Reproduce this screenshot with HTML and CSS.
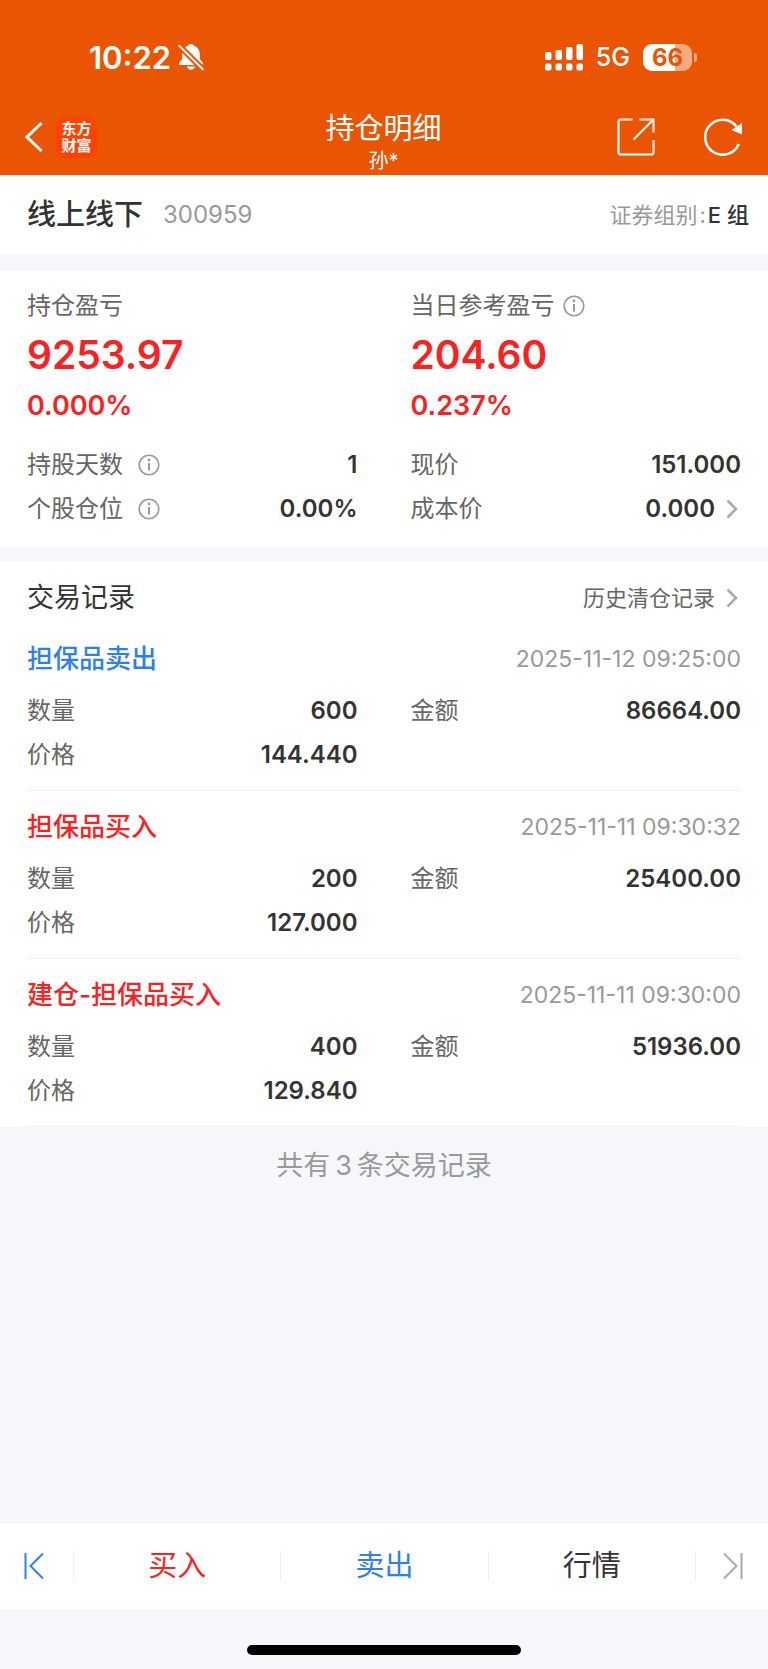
FILE: index.html
```html
<!DOCTYPE html>
<html lang="zh-CN">
<head>
    <meta charset="UTF-8">
    <meta name="viewport" content="width=device-width, initial-scale=1.0">
    <title>持仓明细</title>
    <link rel="stylesheet" href="styles.css">
</head>
<body>
    <svg class="sprite" width="0" height="0" aria-hidden="true">
        <symbol id="info" viewBox="0 0 22 22">
            <circle cx="11" cy="11" r="9.8" fill="none" stroke="currentColor" stroke-width="1.6"/>
            <path d="M11 9v7.6" stroke="currentColor" stroke-width="2"/>
            <circle cx="11" cy="6" r="1.4" fill="currentColor"/>
        </symbol>
        <symbol id="chevron" viewBox="0 0 12 20">
            <path d="M1.500 1.500L10 10l-8.500 8.500" fill="none" stroke="currentColor" stroke-width="2.500"/>
        </symbol>
    </svg>

    <header class="header">
        <div class="status-bar">
            <div class="status-left">
                <span class="time">10:22</span>
                <svg width="26" height="28" viewBox="0 0 26 28" aria-hidden="true">
                    <path d="M13 1c-1.800 0-2.700 1-3 1.800C6.500 4 4.200 7 4.200 11v4.500c0 1.300-3.200 3.600-3.200 5.200 0 .9.600 1.300 1.600 1.300h20.800c1 0 1.600-.4 1.600-1.300 0-1.600-3.200-3.900-3.200-5.200V11c0-4-2.300-7-5.800-8.200C15.700 2 14.800 1 13 1z" fill="#fff"/>
                    <path d="M8.800 23.500h8.400c-.6 2-2.200 3.200-4.200 3.200s-3.600-1.200-4.200-3.200z" fill="#fff"/>
                    <path d="M0 1.500L25.500 27" stroke="#ea5504" stroke-width="6"/>
                    <path d="M1.200 2.700L24.800 26.300" stroke="#fff" stroke-width="2" stroke-linecap="round"/>
                </svg>
            </div>
            <div class="status-right">
                <svg width="38" height="28" viewBox="0 0 38 28" fill="#fff" aria-hidden="true">
                    <rect x="0" y="9" width="6.500" height="8" rx="2"/>
                    <rect x="10.500" y="7" width="6.500" height="10" rx="2"/>
                    <rect x="21" y="4" width="6.500" height="13" rx="2"/>
                    <rect x="31.500" y="1" width="6.500" height="16" rx="2"/>
                    <rect x="0" y="20.500" width="6.500" height="7" rx="2"/>
                    <rect x="10.500" y="20.500" width="6.500" height="7" rx="2"/>
                    <rect x="21" y="20.500" width="6.500" height="7" rx="2"/>
                    <rect x="31.500" y="20.500" width="6.500" height="7" rx="2"/>
                </svg>
                <span class="network">5G</span>
                <span class="battery">66</span>
            </div>
        </div>

        <nav class="nav">
            <div class="nav-left">
                <button class="icon-btn" type="button" aria-label="返回">
                    <svg width="18" height="32" viewBox="0 0 18 32" fill="none" stroke="#fff" stroke-width="3">
                        <path d="M16.500 2L2 16l14.500 14"/>
                    </svg>
                </button>
                <span class="brand">东方<br>财富</span>
            </div>
            <div class="nav-title">
                <h1>持仓明细</h1>
                <p>孙*</p>
            </div>
            <div class="nav-right">
                <button class="icon-btn" type="button" aria-label="分享">
                    <svg width="38" height="38" viewBox="0 0 38 38" fill="none" stroke="#fff" stroke-width="2">
                        <path d="M15.500 1.500H3.500a2 2 0 0 0-2 2v31a2 2 0 0 0 2 2h31a2 2 0 0 0 2-2V22"/>
                        <path d="M22.500 1.500h14v13M36 2L16.500 21.500"/>
                    </svg>
                </button>
                <button class="icon-btn" type="button" aria-label="刷新">
                    <svg width="38" height="38" viewBox="0 0 38 38" fill="none" stroke="#fff" stroke-width="2.500">
                        <path d="M34.800 26A17.500 17.500 0 1 1 32.500 8.500"/>
                        <path d="M38 5v11.500L27.500 12z" fill="#fff" stroke="none"/>
                    </svg>
                </button>
            </div>
        </nav>
    </header>

    <main>
        <section class="stock">
            <h2>线上线下</h2>
            <span class="code">300959</span>
            <p class="group">证券组别<span class="colon">:</span><b>E 组</b></p>
        </section>

        <section class="summary">
            <div class="column">
                <h3>持仓盈亏</h3>
                <p class="profit">9253.97</p>
                <p class="percent">0.000%</p>
                <dl class="rows">
                    <div><dt>持股天数<svg class="info"><use href="#info"/></svg></dt><dd>1</dd></div>
                    <div><dt>个股仓位<svg class="info"><use href="#info"/></svg></dt><dd>0.00%</dd></div>
                </dl>
            </div>
            <div class="column">
                <h3>当日参考盈亏<svg class="info near"><use href="#info"/></svg></h3>
                <p class="profit">204.60</p>
                <p class="percent">0.237%</p>
                <dl class="rows">
                    <div><dt>现价</dt><dd>151.000</dd></div>
                    <div><dt>成本价</dt><dd>0.000<svg class="chevron"><use href="#chevron"/></svg></dd></div>
                </dl>
            </div>
        </section>

        <section class="records">
            <div class="records-head">
                <h2>交易记录</h2>
                <a href="#history">历史清仓记录<svg class="chevron"><use href="#chevron"/></svg></a>
            </div>

            <article class="record">
                <div class="record-head">
                    <h3 class="sell">担保品卖出</h3>
                    <time>2025-11-12 09:25:00</time>
                </div>
                <dl class="rows record-rows">
                    <div><dt>数量</dt><dd>600</dd></div>
                    <div><dt>金额</dt><dd>86664.00</dd></div>
                    <div><dt>价格</dt><dd>144.440</dd></div>
                </dl>
            </article>

            <article class="record">
                <div class="record-head">
                    <h3 class="buy">担保品买入</h3>
                    <time>2025-11-11 09:30:32</time>
                </div>
                <dl class="rows record-rows">
                    <div><dt>数量</dt><dd>200</dd></div>
                    <div><dt>金额</dt><dd>25400.00</dd></div>
                    <div><dt>价格</dt><dd>127.000</dd></div>
                </dl>
            </article>

            <article class="record">
                <div class="record-head">
                    <h3 class="buy">建仓-担保品买入</h3>
                    <time>2025-11-11 09:30:00</time>
                </div>
                <dl class="rows record-rows">
                    <div><dt>数量</dt><dd>400</dd></div>
                    <div><dt>金额</dt><dd>51936.00</dd></div>
                    <div><dt>价格</dt><dd>129.840</dd></div>
                </dl>
            </article>
        </section>

        <p class="total">共有<span class="count">3</span>条交易记录</p>
    </main>

    <footer class="footer">
        <div class="tab-bar">
            <button class="side prev" type="button" aria-label="上一只">
                <svg width="20" height="28" viewBox="0 0 20 28" fill="none" stroke="currentColor" stroke-width="2">
                    <path d="M1.500 1v26M19 1.500L6.500 14 19 26.500"/>
                </svg>
            </button>
            <button class="buy" type="button">买入</button>
            <button class="sell" type="button">卖出</button>
            <button type="button">行情</button>
            <button class="side next" type="button" aria-label="下一只">
                <svg width="20" height="28" viewBox="0 0 20 28" fill="none" stroke="currentColor" stroke-width="2">
                    <path d="M18.500 1v26M1 1.500L13.500 14 1 26.500"/>
                </svg>
            </button>
        </div>
        <div class="home-indicator"></div>
    </footer>
</body>
</html>
```

FILE: styles.css
```css
* {
    margin: 0;
    padding: 0;
    box-sizing: border-box;
}

:root {
    --brand: #ea5504;
    --red: #f82222;
    --blue: #2f80ea;
    --text: #333;
    --label: #666;
    --muted: #999;
    --bg: #f6f7fa;
    --line: #f2f3f5;
    --gutter: 27px;
}

body {
    display: flex;
    flex-direction: column;
    min-height: 100vh;
    background: var(--bg);
    color: var(--text);
    font-family: Inter, "Noto Sans CJK SC", sans-serif;
    font-size: 24px;
}

button {
    background: none;
    border: none;
    font: inherit;
    color: inherit;
    cursor: pointer;
}

a {
    color: inherit;
    text-decoration: none;
}

svg {
    display: block;
    flex: none;
}

.sprite {
    position: absolute;
}

/* Header */
.header {
    background: var(--brand);
    color: #fff;
}

.status-bar {
    display: flex;
    justify-content: space-between;
    align-items: center;
    height: 99px;
    padding: 15px 71px 0 89px;
}

.status-left,
.status-right {
    display: flex;
    align-items: center;
}

.status-left {
    gap: 7px;
}

.status-right {
    gap: 13px;
}

.time {
    font-size: 31px;
    font-weight: 600;
}

.network {
    font-size: 25px;
    font-weight: 500;
}

.battery {
    position: relative;
    width: 49px;
    height: 27px;
    margin-right: 5px;
    border-radius: 9px;
    background: linear-gradient(to right, #fff 66%, rgba(255, 255, 255, 0.5) 66%);
    color: var(--brand);
    font-weight: 700;
    line-height: 27px;
    text-align: center;
}

.battery::after {
    content: "";
    position: absolute;
    top: 9px;
    right: -5px;
    width: 3px;
    height: 9px;
    border-radius: 0 4px 4px 0;
    background: rgba(255, 255, 255, 0.5);
}

.nav {
    display: grid;
    grid-template-columns: 1fr auto 1fr;
    align-items: center;
    height: 76px;
    padding: 0 26px 0 25px;
}

.nav-left,
.nav-right {
    display: flex;
    align-items: center;
}

.nav-left {
    gap: 13px;
}

.nav-right {
    justify-content: flex-end;
    gap: 49px;
}

.brand {
    width: 41px;
    height: 41px;
    padding-top: 3px;
    border-radius: 9px;
    background: #ff4200;
    font-size: 15px;
    font-weight: 700;
    line-height: 17px;
    text-align: center;
}

.nav-title {
    padding-top: 10px;
    text-align: center;
}

.nav-title h1 {
    font-size: 29px;
    font-weight: 400;
    line-height: 38px;
}

.nav-title p {
    font-size: 20px;
    line-height: 26px;
}

/* Stock name */
.stock {
    display: flex;
    align-items: center;
    height: 79px;
    padding: 0 19px 0 var(--gutter);
    background: #fff;
    line-height: 40px;
}

.stock h2 {
    font-size: 29px;
    font-weight: 500;
}

.code {
    margin-left: 20px;
    color: var(--muted);
}

.group {
    margin-left: auto;
    color: var(--muted);
    font-size: 22px;
}

.colon {
    padding: 0 2px;
}

.group b {
    color: var(--text);
    font-weight: 500;
}

/* Profit summary */
.summary {
    display: grid;
    grid-template-columns: 1fr 1fr;
    column-gap: 53px;
    margin-top: 17px;
    padding: 16px var(--gutter);
    background: #fff;
}

.summary h3 {
    display: flex;
    align-items: center;
    color: var(--label);
    font-size: 24px;
    font-weight: 400;
    line-height: 38px;
}

.info {
    width: 22px;
    height: 22px;
    margin-left: 15px;
    color: var(--muted);
}

.info.near {
    margin-left: 8px;
}

.profit {
    color: var(--red);
    font-size: 39px;
    font-weight: 600;
    line-height: 60px;
}

.percent {
    margin-bottom: 16px;
    color: var(--red);
    font-size: 27px;
    font-weight: 600;
    line-height: 42px;
}

.rows div {
    display: flex;
    justify-content: space-between;
    line-height: 44px;
}

.rows dt,
.rows dd {
    display: flex;
    align-items: center;
}

.rows dt {
    color: var(--label);
}

.rows dd {
    font-weight: 600;
}

.chevron {
    width: 12px;
    height: 20px;
    margin: 0 3px 0 11px;
    color: #aaa;
}

/* Trade records */
.records {
    margin-top: 14px;
    padding-top: 12px;
    background: #fff;
}

.records-head {
    display: flex;
    justify-content: space-between;
    align-items: center;
    padding: 0 var(--gutter);
    line-height: 50px;
}

.records-head h2 {
    font-size: 27px;
    font-weight: 400;
}

.records-head a {
    display: flex;
    align-items: center;
    color: var(--label);
    font-size: 22px;
}

.record {
    margin: 0 var(--gutter);
    padding: 12px 0 13px;
    border-bottom: 1px solid var(--line);
}

.record-head {
    display: flex;
    justify-content: space-between;
    align-items: center;
    margin-bottom: 6px;
    line-height: 48px;
}

.record-head h3 {
    font-size: 26px;
    font-weight: 500;
}

.record-head time {
    color: var(--muted);
    font-size: 23px;
}

.record-rows {
    display: grid;
    grid-template-columns: 1fr 1fr;
    column-gap: 53px;
}

.buy {
    color: var(--red);
}

.sell {
    color: var(--blue);
}

.total {
    padding-top: 19px;
    color: var(--muted);
    font-size: 27px;
    line-height: 40px;
    text-align: center;
}

.count {
    padding: 0 5px;
}

/* Bottom bar */
.footer {
    margin-top: auto;
}

.tab-bar {
    display: grid;
    grid-template-columns: 73px 1fr 1fr 1fr 73px;
    align-items: center;
    height: 87px;
    border-top: 1px solid var(--line);
    background: #fff;
}

.tab-bar button {
    display: flex;
    justify-content: center;
    align-items: center;
    height: 30px;
    border-left: 1px solid #eee;
    font-size: 29px;
    line-height: 30px;
}

.tab-bar .prev {
    padding-right: 5px;
    border-left: none;
    color: var(--blue);
}

.tab-bar .next {
    padding-left: 3px;
    color: #aaa;
}

.home-indicator {
    width: 274px;
    height: 10px;
    margin: 36px auto 14px;
    border-radius: 5px;
    background: #000;
}
```
